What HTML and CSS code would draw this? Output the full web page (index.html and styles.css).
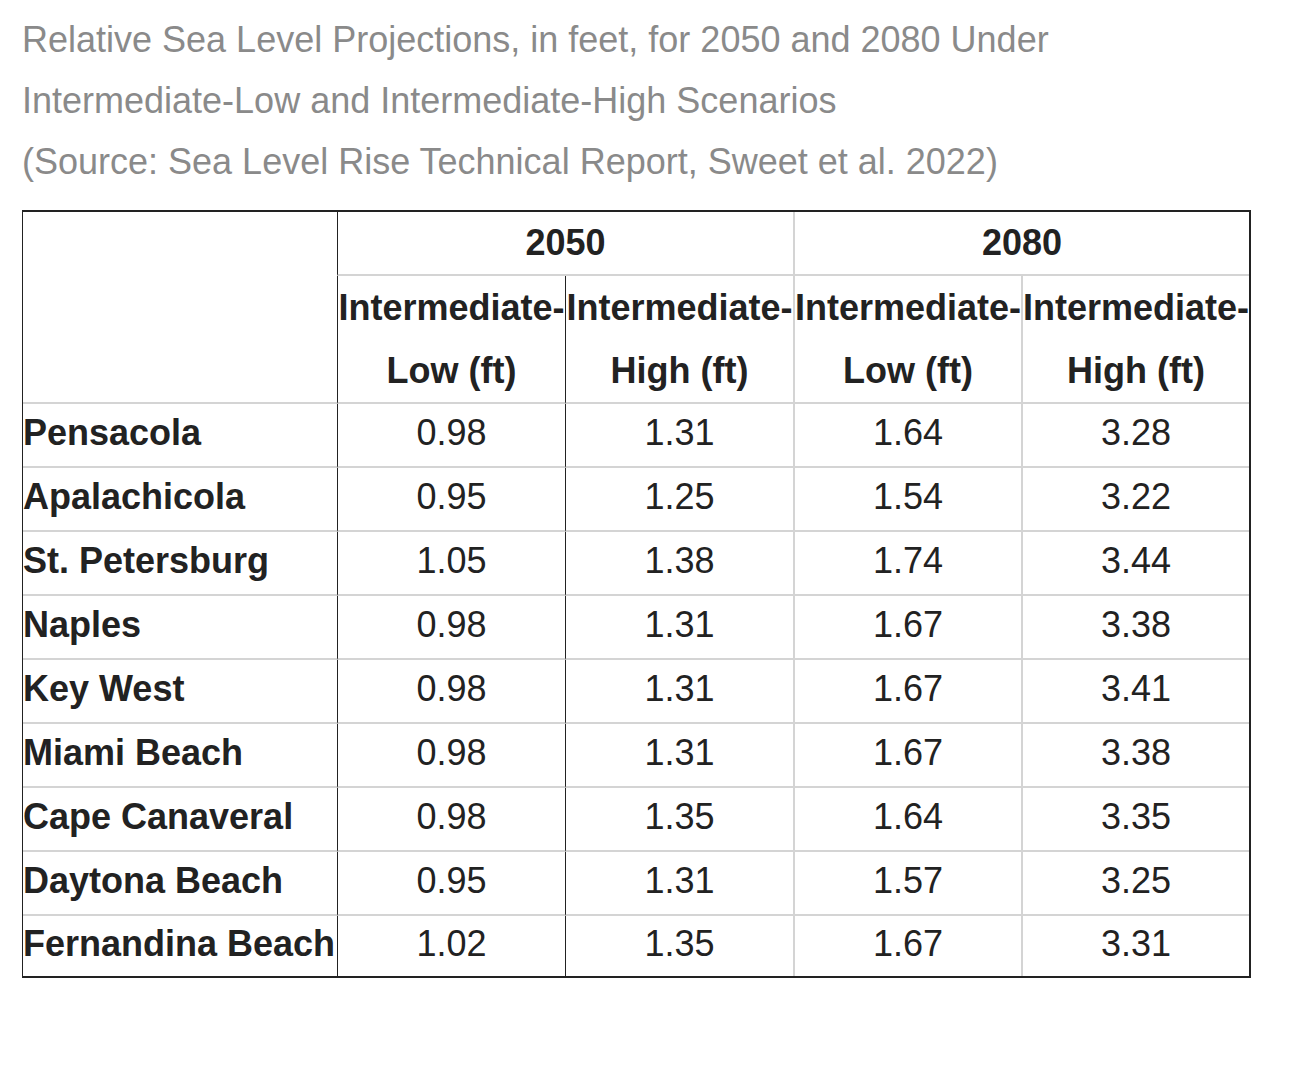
FILE: index.html
```html
<!DOCTYPE html>
<html lang="en">
<head>
<meta charset="utf-8">
<title>Relative Sea Level Projections</title>
<link rel="stylesheet" href="styles.css">
</head>
<body>
<div class="page">
  <p class="caption">Relative Sea Level Projections, in feet, for 2050 and 2080 Under Intermediate-Low and Intermediate-High Scenarios<br>(Source: Sea Level Rise Technical Report, Sweet et al. 2022)</p>
  <table class="slr">
    <colgroup>
      <col class="c-city">
      <col class="c-val">
      <col class="c-val">
      <col class="c-val">
      <col class="c-val">
    </colgroup>
    <thead>
      <tr class="r-year">
        <th rowspan="2" class="corner"></th>
        <th colspan="2" class="dark-left">2050</th>
        <th colspan="2" class="gray-left">2080</th>
      </tr>
      <tr class="r-scen">
        <th class="dark-left">Intermediate-<br>Low (ft)</th>
        <th class="dark-left">Intermediate-<br>High (ft)</th>
        <th class="gray-left">Intermediate-<br>Low (ft)</th>
        <th class="gray-left">Intermediate-<br>High (ft)</th>
      </tr>
    </thead>
    <tbody>
      <tr><th class="city">Pensacola</th><td class="dark-left">0.98</td><td class="dark-left">1.31</td><td class="gray-left">1.64</td><td class="gray-left">3.28</td></tr>
      <tr><th class="city">Apalachicola</th><td class="dark-left">0.95</td><td class="dark-left">1.25</td><td class="gray-left">1.54</td><td class="gray-left">3.22</td></tr>
      <tr><th class="city">St. Petersburg</th><td class="dark-left">1.05</td><td class="dark-left">1.38</td><td class="gray-left">1.74</td><td class="gray-left">3.44</td></tr>
      <tr><th class="city">Naples</th><td class="dark-left">0.98</td><td class="dark-left">1.31</td><td class="gray-left">1.67</td><td class="gray-left">3.38</td></tr>
      <tr><th class="city">Key West</th><td class="dark-left">0.98</td><td class="dark-left">1.31</td><td class="gray-left">1.67</td><td class="gray-left">3.41</td></tr>
      <tr><th class="city">Miami Beach</th><td class="dark-left">0.98</td><td class="dark-left">1.31</td><td class="gray-left">1.67</td><td class="gray-left">3.38</td></tr>
      <tr><th class="city">Cape Canaveral</th><td class="dark-left">0.98</td><td class="dark-left">1.35</td><td class="gray-left">1.64</td><td class="gray-left">3.35</td></tr>
      <tr><th class="city">Daytona Beach</th><td class="dark-left">0.95</td><td class="dark-left">1.31</td><td class="gray-left">1.57</td><td class="gray-left">3.25</td></tr>
      <tr><th class="city">Fernandina Beach</th><td class="dark-left">1.02</td><td class="dark-left">1.35</td><td class="gray-left">1.67</td><td class="gray-left">3.31</td></tr>
    </tbody>
  </table>
</div>
</body>
</html>
```
FILE: styles.css
```css
html, body {
  margin: 0;
  padding: 0;
  background: #ffffff;
}

.page {
  padding: 9px 0 0 22px;
  font-family: "Liberation Sans", Arial, Helvetica, sans-serif;
}

.caption {
  margin: 0 0 18px 0;
  width: 1228px;
  font-size: 36px;
  line-height: 61px;
  color: #8a8a8a;
}

.slr {
  border-collapse: separate;
  border-spacing: 0;
  table-layout: fixed;
  width: 1228px;
  border-top: 2px solid #222222;
  border-left: 1px solid #222222;
  border-right: 2px solid #222222;
  border-bottom: 2px solid #222222;
  color: #222222;
  font-size: 36px;
}

.c-city { width: 314px; }
.c-val { width: 228px; }

.slr th,
.slr td {
  padding: 0;
  line-height: 62px;
  text-align: center;
  white-space: nowrap;
  border-bottom: 2px solid #d4d4d4;
}

.slr th { font-weight: bold; }
.slr td { font-weight: normal; }

.slr .r-scen th { line-height: 63px; }

.slr tbody th,
.slr tbody td {
  line-height: 58px;
  padding-bottom: 4px;
}

.slr tbody tr:last-child th,
.slr tbody tr:last-child td {
  border-bottom: none;
  line-height: 56px;
}

.slr th.city {
  text-align: left;
}

.dark-left { border-left: 1px solid #222222; }
.gray-left { border-left: 2px solid #d4d4d4; }
```
